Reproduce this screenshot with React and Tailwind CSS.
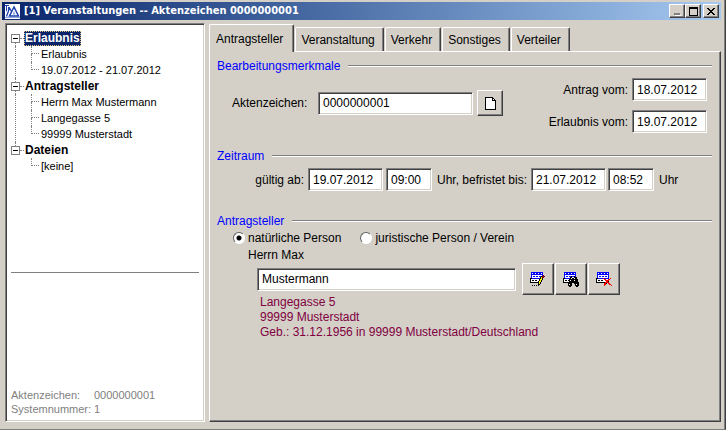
import React, { useState } from "react";

const colors = { B: "#0000ff", K: "#000000", W: "#ffffff", Y: "#ffff00", R: "#ff0000", M: "#800000" };

const icons = {
  edit: [
    ".BBBBBBBBBBBB...",
    ".BWBBWBBWBBWB...",
    ".BBBBBBBBBBBB...",
    ".BWWWWWWWWWWBM..",
    ".BWBBWBBWBBKMMM.",
    ".BWWWWWWWWKYMM..",
    "KKBBBBBBBBKYK...",
    "KWWWWWWWWKYYK...",
    "KWKKWKKWWKYK....",
    "KWWWWWWWKYYK....",
    "KKKKKKKKKYK.....",
    "........KYK.....",
    "........KK......",
    "..K.K.K.K.......",
  ],
  search: [
    ".BBBBBBBBBBBB...",
    ".BWBBWBBWBBWB...",
    ".BBBBBBBBBBBB...",
    ".BWWWWWWWWWWB...",
    ".BWBBWBBKBBKB...",
    ".BWWWWWKKWWKKK..",
    "KKBBBBBKWKKWKK..",
    "KWWWWWKKKKKKKKK.",
    "KWKKWKKWKKKWKKK.",
    "KWWWWWKKKKKKKKK.",
    "KKKKKKKKKKKKKKKK",
    ".....KKKK..KKKKK",
    ".....KWKK...KWKK",
    ".....KKKK...KKKK",
    "......KK.....KK.",
  ],
  remove: [
    ".BBBBBBBBBBBB...",
    ".BWBBWBBWBBWB...",
    ".BBBBBBBBBBBB...",
    ".BWWWWWWWWWWB...",
    ".BWBBWBBWBBWB...",
    ".BWWWWWWWWWWB...",
    "KKBBBBBRBBBBB.R.",
    "KWWWWWWWRRWWRR..",
    "KWKKWKKWWRRRR...",
    "KWWWWWWWWWRRK...",
    "KKKKKKKKKRRRR...",
    "........RRK.RR..",
    "........RR...RR.",
    "........R......R",
  ],
};

const PixelIcon = ({ name }) => (
  <svg width="16" height="15" viewBox="0 0 16 15" shapeRendering="crispEdges" aria-hidden="true">
    {icons[name].map((row, y) =>
      row.split("").map((c, x) =>
        c === "." ? null : (
          <rect key={`${x}-${y}`} x={x} y={y} width="1" height="1" fill={colors[c]} />
        )
      )
    )}
  </svg>
);

const raised =
  "flex items-center justify-center shrink-0 border border-t-white border-l-white border-r-[#404040] border-b-[#404040] bg-[#d4d0c8] shadow-[inset_-1px_-1px_0_#808080]";

const sunken =
  "border border-t-[#808080] border-l-[#808080] border-r-white border-b-white bg-white shadow-[inset_1px_1px_0_#404040,inset_-1px_-1px_0_#d4d0c8]";

const Field = ({ className, ...props }) => (
  <input type="text" className={`h-[23px] shrink-0 px-1 text-xs outline-none ${sunken} ${className}`} {...props} />
);

const Legend = ({ children, className = "" }) => (
  <div className={`flex h-4 items-center gap-2 ${className}`}>
    <h2 className="leading-4 text-[#0000ff]">{children}</h2>
    <span className="h-[2px] flex-1 border-t border-b border-t-[#808080] border-b-white" />
  </div>
);

const tree = [
  { title: "Erlaubnis", items: ["Erlaubnis", "19.07.2012 - 21.07.2012"] },
  { title: "Antragsteller", items: ["Herrn Max Mustermann", "Langegasse 5", "99999 Musterstadt"] },
  { title: "Dateien", items: ["[keine]"] },
];

const Tree = () => (
  <ul className="pt-1 leading-4">
    {tree.map((group, i) => {
      const last = i === tree.length - 1;
      return (
        <li key={group.title}>
          <div className="flex h-4 items-center">
            <span className="flex w-[9px] flex-col items-center self-stretch">
              <span className={`flex-1 border-l border-dotted ${i === 0 ? "border-transparent" : "border-[#808080]"}`} />
              <button
                type="button"
                aria-label={`${group.title} schließen`}
                className="flex h-[9px] w-[9px] items-center justify-center border border-[#808080] bg-white"
              >
                <span className="h-px w-[5px] bg-black" />
              </button>
              <span className={`flex-1 border-l border-dotted ${last ? "border-transparent" : "border-[#808080]"}`} />
            </span>
            <span className="w-1 border-t border-dotted border-[#808080]" />
            <span
              className={
                i === 0
                  ? "h-[15px] border border-dotted border-[#e0c080] bg-[#0a246a] text-xs leading-[13px] font-bold text-white"
                  : "pl-px text-xs leading-4 font-bold"
              }
            >
              {group.title}
            </span>
          </div>
          <ul className={`ml-1 border-l border-dotted ${last ? "border-transparent" : "border-[#808080]"}`}>
            {group.items.map((item, j) => (
              <li key={item} className="flex h-4 pl-[15px]">
                <span className="flex w-2 flex-col">
                  <span className="h-2 border-b border-l border-dotted border-[#808080]" />
                  {j < group.items.length - 1 && <span className="h-2 border-l border-dotted border-[#808080]" />}
                </span>
                <span className="pl-[2px] text-[11px] whitespace-nowrap">{item}</span>
              </li>
            ))}
          </ul>
        </li>
      );
    })}
  </ul>
);

const tabs = ["Antragsteller", "Veranstaltung", "Verkehr", "Sonstiges", "Verteiler"];

const radioClass =
  "h-3 w-3 shrink-0 appearance-none rounded-full border border-t-[#606060] border-l-[#606060] border-r-white border-b-white bg-white checked:bg-[radial-gradient(circle,#000_2px,#fff_3px)]";

const App = () => {
  const [activeTab, setActiveTab] = useState("Antragsteller");
  const [person, setPerson] = useState("natuerlich");

  return (
    <div className="flex min-h-screen flex-col border-r border-b border-r-[#404040] border-b-[#808080] bg-[#d4d0c8] pt-[2px] pr-1 pb-[7px] pl-[2px] font-['Liberation_Sans',Arial,sans-serif] text-xs text-black shadow-[inset_-1px_0_0_#808080]">
      <header className="flex h-[18px] items-center bg-linear-to-r from-[#0a246a] to-[#a6caf0] pr-[2px] pl-[3px]">
        <svg width="15" height="15" viewBox="0 0 15 15" aria-hidden="true">
          <rect width="15" height="15" fill="#fff" />
          <path d="M0 1.500h4M1.500 1v6M3.500 3v3" fill="none" stroke="#1c3fae" />
          <path d="M1.500 12.500L4.500 4L8 10" fill="none" stroke="#1c3fae" strokeWidth="1.300" />
          <path d="M9 3L4.500 12H13.500Z" fill="#fff" stroke="#1c3fae" strokeWidth="1.500" />
          <path d="M9 7L7.500 10.500H10.500Z" fill="#8fa8e0" />
          <path d="M0 13.500h15" stroke="#8fa8e0" />
        </svg>
        <h1 className="flex-1 pl-1 font-['DejaVu_Sans_Condensed','Noto_Sans',sans-serif] text-[11px] leading-4 font-bold whitespace-nowrap text-white">
          [1] Veranstaltungen -- Aktenzeichen 0000000001
        </h1>
        <button type="button" aria-label="Minimieren" className={`h-[14px] w-4 ${raised}`}>
          <svg width="10" height="9" viewBox="0 0 10 9" shapeRendering="crispEdges">
            <path d="M2 6h6v2H2z" fill="#808080" />
            <path d="M3 8h6v1H3z" fill="#fff" />
          </svg>
        </button>
        <button type="button" aria-label="Maximieren" className={`h-[14px] w-4 ${raised}`}>
          <svg width="9" height="9" viewBox="0 0 9 9" shapeRendering="crispEdges">
            <path d="M0 0h9v9H0zM1 2v6h7V2z" fillRule="evenodd" />
          </svg>
        </button>
        <button type="button" aria-label="Schließen" className={`ml-[2px] h-[14px] w-4 ${raised}`}>
          <svg width="8" height="7" viewBox="0 0 8 7" shapeRendering="crispEdges">
            <path d="M0 0h2v1h1v1h2V1h1V0h2v1H7v1H6v1H5v1h1v1h1v1h1v1H6V6H5V5H3v1H2v1H0V6h1V5h1V4h1V3H2V2H1V1H0z" />
          </svg>
        </button>
      </header>

      <div className="flex flex-1 gap-1 pt-[3px] pl-[3px]">
        <aside className={`flex w-[200px] shrink-0 flex-col px-[5px] pt-[2px] pb-[5px] ${sunken}`}>
          <div className="flex-1 border-b border-[#808080]">
            <Tree />
          </div>
          <dl className="grid h-[143px] grid-cols-[83px_1fr] content-end text-[11px] leading-[14px] text-[#808080]">
            <dt>Aktenzeichen:</dt>
            <dd>0000000001</dd>
            <dt>Systemnummer:</dt>
            <dd>1</dd>
          </dl>
        </aside>

        <main className="flex min-w-0 flex-1 flex-col pt-px">
          <div role="tablist" className="flex items-end gap-px">
            {tabs.map((tab) => (
              <button
                key={tab}
                type="button"
                role="tab"
                aria-selected={activeTab === tab}
                onClick={() => setActiveTab(tab)}
                className={`rounded-t-[2px] border-t border-r border-l border-t-white border-r-[#404040] border-l-white shadow-[inset_-1px_0_0_#808080] ${
                  activeTab === tab
                    ? "relative -mb-px h-7 bg-[#d4d0c8] pr-[10px] pl-[6px]"
                    : "h-6 pr-2 pl-[5px]"
                }`}
              >
                {tab}
              </button>
            ))}
          </div>

          <form className="flex-1 border border-t-white border-r-[#404040] border-b-[#404040] border-l-white pt-[6px] pr-2 pl-[7px] shadow-[inset_-1px_-1px_0_#808080]">
            <Legend>Bearbeitungsmerkmale</Legend>
            <div className="flex justify-between pt-1 pr-[5px]">
              <div className="flex items-center self-start pt-3 pl-[15px]">
                <label htmlFor="aktenzeichen" className="w-[86px]">
                  Aktenzeichen:
                </label>
                <Field id="aktenzeichen" defaultValue="0000000001" className="w-[155px]" />
                <button type="button" aria-label="Neues Aktenzeichen" className={`ml-1 h-[26px] w-[26px] ${raised}`}>
                  <svg width="11" height="13" viewBox="0 0 11 13" shapeRendering="crispEdges">
                    <path d="M0 0h8v1h1v1h1v1h1v10H0z" />
                    <path d="M1 1h6v3h3v8H1zM8 2h1v1H8z" fill="#fff" />
                  </svg>
                </button>
              </div>
              <div className="flex flex-col items-end gap-[9px]">
                <div className="flex items-center gap-1">
                  <label htmlFor="antrag">Antrag vom:</label>
                  <Field id="antrag" defaultValue="18.07.2012" className="w-[75px]" />
                </div>
                <div className="flex items-center gap-1">
                  <label htmlFor="erlaubnis">Erlaubnis vom:</label>
                  <Field id="erlaubnis" defaultValue="19.07.2012" className="w-[75px]" />
                </div>
              </div>
            </div>

            <Legend className="mt-[15px]">Zeitraum</Legend>
            <div className="mt-1 flex items-center whitespace-nowrap">
              <label htmlFor="von" className="w-[91px] pr-1 text-right">
                gültig ab:
              </label>
              <Field id="von" defaultValue="19.07.2012" className="w-[75px]" />
              <Field aria-label="gültig ab, Uhrzeit" defaultValue="09:00" className="ml-[3px] w-[46px]" />
              <label htmlFor="bis" className="w-[99px] pl-[5px]">
                Uhr, befristet bis:
              </label>
              <Field id="bis" defaultValue="21.07.2012" className="w-[75px]" />
              <Field aria-label="befristet bis, Uhrzeit" defaultValue="08:52" className="ml-[2px] w-[46px]" />
              <span className="pl-[5px]">Uhr</span>
            </div>

            <Legend className="mt-[22px]">Antragsteller</Legend>
            <div className="mt-px flex h-4 items-center gap-[19px] pl-4">
              <label className="flex items-center gap-[3px]">
                <input
                  type="radio"
                  name="person"
                  checked={person === "natuerlich"}
                  onChange={() => setPerson("natuerlich")}
                  className={radioClass}
                />
                natürliche Person
              </label>
              <label className="flex items-center gap-[3px]">
                <input
                  type="radio"
                  name="person"
                  checked={person === "juristisch"}
                  onChange={() => setPerson("juristisch")}
                  className={radioClass}
                />
                juristische Person / Verein
              </label>
            </div>
            <label htmlFor="name" className="mt-px block h-4 pl-[31px] leading-4">
              Herrn Max
            </label>
            <div className="flex items-center pl-10">
              <Field id="name" defaultValue="Mustermann" className="w-[259px]" />
              <div className="ml-[6px] flex gap-px">
                <button type="button" aria-label="Bearbeiten" className={`h-8 w-8 ${raised}`}>
                  <PixelIcon name="edit" />
                </button>
                <button type="button" aria-label="Suchen" className={`h-8 w-8 ${raised}`}>
                  <PixelIcon name="search" />
                </button>
                <button type="button" aria-label="Entfernen" className={`h-8 w-8 ${raised}`}>
                  <PixelIcon name="remove" />
                </button>
              </div>
            </div>
            <address className="pl-[43px] leading-[15px] text-[#800040] not-italic">
              <p>Langegasse 5</p>
              <p>99999 Musterstadt</p>
              <p>Geb.: 31.12.1956 in 99999 Musterstadt/Deutschland</p>
            </address>
          </form>
        </main>
      </div>
    </div>
  );
};

export default App;
